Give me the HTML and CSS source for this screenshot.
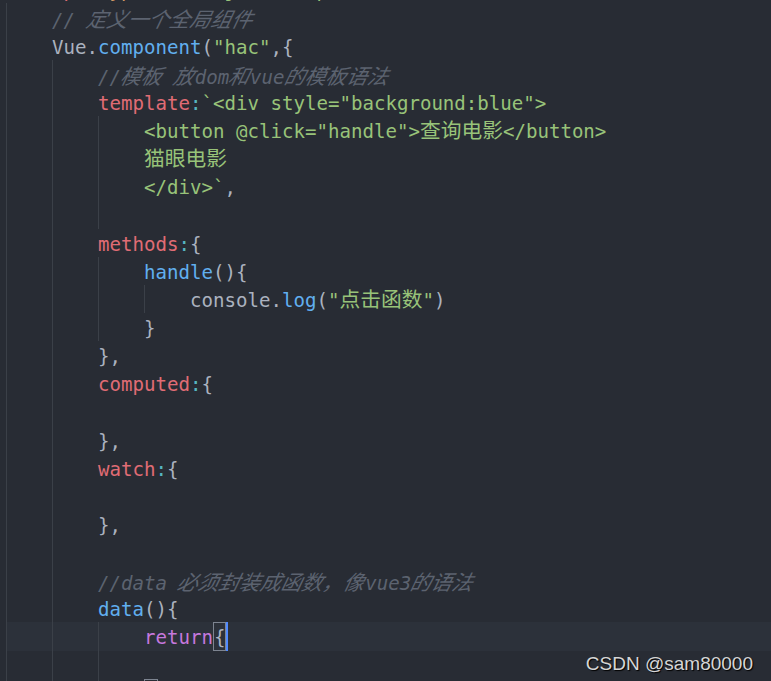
FILE: index.html
```html
<!DOCTYPE html>
<html lang="zh">
<head>
<meta charset="utf-8">
<title>Vue.component</title>
<link rel="stylesheet" href="styles.css">
</head>
<body>
<div class="editor">
  <div class="ln"><span class="code"><span class="p">&lt;</span><span class="tag">script</span> <span class="attr">type</span><span class="p">=</span><span class="s">"text/javascript"</span><span class="p">&gt;</span></span></div>
  <div class="ln"><i class="g"></i><span class="code cm">// <span class="zh">定义一个全局组件</span></span></div>
  <div class="ln"><i class="g"></i><span class="code">Vue.<span class="fn">component</span>(<span class="s">"hac"</span>,{</span></div>
  <div class="ln"><i class="g"></i><i class="g"></i><span class="code cm">//<span class="zh">模板</span> <span class="zh">放</span>dom<span class="zh">和</span>vue<span class="zh">的模板语法</span></span></div>
  <div class="ln"><i class="g"></i><i class="g"></i><span class="code"><span class="key">template</span><span class="col">:</span><span class="s">`&lt;div style="background:blue"&gt;</span></span></div>
  <div class="ln"><i class="g"></i><i class="g"></i><i class="g"></i><span class="code s">&lt;button @click="handle"&gt;<span class="zh">查询电影</span>&lt;/button&gt;</span></div>
  <div class="ln"><i class="g"></i><i class="g"></i><i class="g"></i><span class="code s"><span class="zh">猫眼电影</span></span></div>
  <div class="ln"><i class="g"></i><i class="g"></i><i class="g"></i><span class="code"><span class="s">&lt;/div&gt;`</span>,</span></div>
  <div class="ln"><i class="g"></i><i class="g"></i><i class="g"></i></div>
  <div class="ln"><i class="g"></i><i class="g"></i><span class="code"><span class="key">methods</span><span class="col">:</span>{</span></div>
  <div class="ln"><i class="g"></i><i class="g"></i><i class="g"></i><span class="code"><span class="fn">handle</span>(){</span></div>
  <div class="ln"><i class="g"></i><i class="g"></i><i class="g"></i><i class="g"></i><span class="code">console.<span class="fn">log</span>(<span class="s">"<span class="zh">点击函数</span>"</span>)</span></div>
  <div class="ln"><i class="g"></i><i class="g"></i><i class="g"></i><span class="code">}</span></div>
  <div class="ln"><i class="g"></i><i class="g"></i><span class="code">},</span></div>
  <div class="ln"><i class="g"></i><i class="g"></i><span class="code"><span class="key">computed</span><span class="col">:</span>{</span></div>
  <div class="ln"><i class="g"></i><i class="g"></i></div>
  <div class="ln"><i class="g"></i><i class="g"></i><span class="code">},</span></div>
  <div class="ln"><i class="g"></i><i class="g"></i><span class="code"><span class="key">watch</span><span class="col">:</span>{</span></div>
  <div class="ln"><i class="g"></i><i class="g"></i></div>
  <div class="ln"><i class="g"></i><i class="g"></i><span class="code">},</span></div>
  <div class="ln"><i class="g"></i><i class="g"></i></div>
  <div class="ln"><i class="g"></i><i class="g"></i><span class="code cm">//data <span class="zh">必须封装成函数，像</span>vue3<span class="zh">的语法</span></span></div>
  <div class="ln"><i class="g"></i><i class="g"></i><span class="code"><span class="fn">data</span>(){</span></div>
  <div class="ln cur"><i class="g"></i><i class="g"></i><i class="g"></i><span class="code"><span class="kw">return</span><span class="match">{</span><span class="caret"></span></span></div>
  <div class="ln"><i class="g"></i><i class="g"></i><i class="g"></i></div>
  <div class="ln"><i class="g"></i><i class="g"></i><i class="g"></i><span class="code"><span class="match">}</span></span></div>
</div>
<div class="mark">CSDN @sam80000</div>
</body>
</html>
```
FILE: styles.css
```css
html, body {
  margin: 0;
  padding: 0;
  height: 100%;
  overflow: hidden;
  background: #282c34;
}

.editor {
  margin-top: -24.75px;
  padding-left: 6px;
  font-family: "DejaVu Sans Mono", "Noto Sans CJK SC", monospace;
  font-size: 19.1px;
  color: #abb2bf;
}

.ln {
  display: flex;
  align-items: stretch;
  height: 28.15px;
  white-space: pre;
}

.ln.cur {
  background: #2c313a;
}

.g {
  display: block;
  flex: none;
  width: 46px;
  box-sizing: border-box;
  border-left: 1px solid #3b4048;
}

.code {
  display: block;
  line-height: 31px;
}

.zh {
  font-family: "Noto Sans CJK SC", sans-serif;
  font-size: 20.75px;
  line-height: 0;
}

.cm { color: #5c6370; font-style: italic; }

.cm .zh {
  display: inline-block;
  line-height: 31px;
  transform: skewX(-13deg);
}

.fn { color: #61afef; }
.s { color: #98c379; }
.key { color: #e06c75; }
.col { color: #56b6c2; }
.kw { color: #c678dd; }
.tag { color: #e06c75; }
.attr { color: #d19a66; }
.p { color: #abb2bf; }

.match {
  display: inline-block;
  box-sizing: border-box;
  height: 28.15px;
  vertical-align: top;
  border: 1px solid #7d8490;
  line-height: 29px;
}

.caret {
  display: inline-block;
  width: 2px;
  height: 28.15px;
  vertical-align: top;
  background: #528bff;
}

.mark {
  position: absolute;
  right: 18px;
  bottom: 6px;
  font-family: "Liberation Sans", Arial, sans-serif;
  font-size: 19px;
  color: #d6d6d6;
  text-shadow: 1px 1px 1px #000;
}
```
